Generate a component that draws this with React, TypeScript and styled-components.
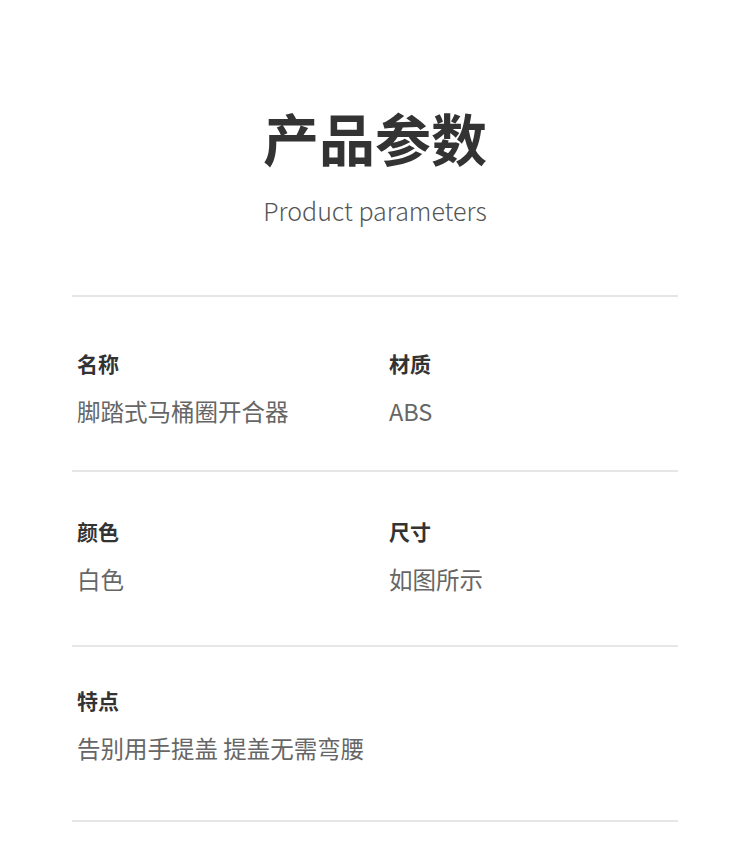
import styled, { createGlobalStyle } from "styled-components";

const GlobalStyle = createGlobalStyle`
  html, body {
    margin: 0;
    padding: 0;
    background: #ffffff;
  }
  body {
    font-family: "Noto Sans CJK SC", "Noto Sans", sans-serif;
  }
`;

// Page
const Page = styled.div`
  width: 750px;
  min-height: 851px;
  background: #ffffff;
  padding: 109px 72px 0;
  box-sizing: border-box;
`;

const Header = styled.header`
  display: flex;
  flex-direction: column;
  align-items: center;
  padding-bottom: 72px;
`;

const Title = styled.h1`
  margin: 0;
  font-size: 56px;
  line-height: 56px;
  font-weight: 700;
  color: #333333;
`;

const Subtitle = styled.p`
  margin: 33px 0 0;
  font-size: 25px;
  line-height: 25px;
  font-weight: 300;
  color: #555555;
`;

// Parameter table
const Table = styled.section`
  border-top: 2px solid #e6e6e6;
`;

const Row = styled.div<{ $top: number }>`
  display: grid;
  grid-template-columns: 312px 1fr;
  align-items: start;
  height: 175px;
  padding: ${(p) => p.$top}px 5px 0;
  border-bottom: 2px solid #e6e6e6;
  box-sizing: border-box;
`;

const Cell = styled.div`
  display: flex;
  flex-direction: column;
`;

const Label = styled.div`
  font-size: 21px;
  line-height: 21px;
  font-weight: 700;
  color: #333333;
`;

const Value = styled.div`
  margin-top: 25px;
  font-size: 23.5px;
  line-height: 24px;
  font-weight: 400;
  color: #666666;
  white-space: nowrap;
`;

type Param = { label: string; value: string };

const rows: { top: number; items: Param[] }[] = [
  {
    top: 56,
    items: [
      { label: "名称", value: "脚踏式马桶圈开合器" },
      { label: "材质", value: "ABS" },
    ],
  },
  {
    top: 49,
    items: [
      { label: "颜色", value: "白色" },
      { label: "尺寸", value: "如图所示" },
    ],
  },
  {
    top: 43,
    items: [{ label: "特点", value: "告别用手提盖 提盖无需弯腰" }],
  },
];

export default function App() {
  return (
    <>
      <GlobalStyle />
      <Page>
        <Header>
          <Title>产品参数</Title>
          <Subtitle>Product parameters</Subtitle>
        </Header>
        <Table>
          {rows.map((row, i) => (
            <Row key={i} $top={row.top}>
              {row.items.map((p) => (
                <Cell key={p.label}>
                  <Label>{p.label}</Label>
                  <Value>{p.value}</Value>
                </Cell>
              ))}
            </Row>
          ))}
        </Table>
      </Page>
    </>
  );
}
